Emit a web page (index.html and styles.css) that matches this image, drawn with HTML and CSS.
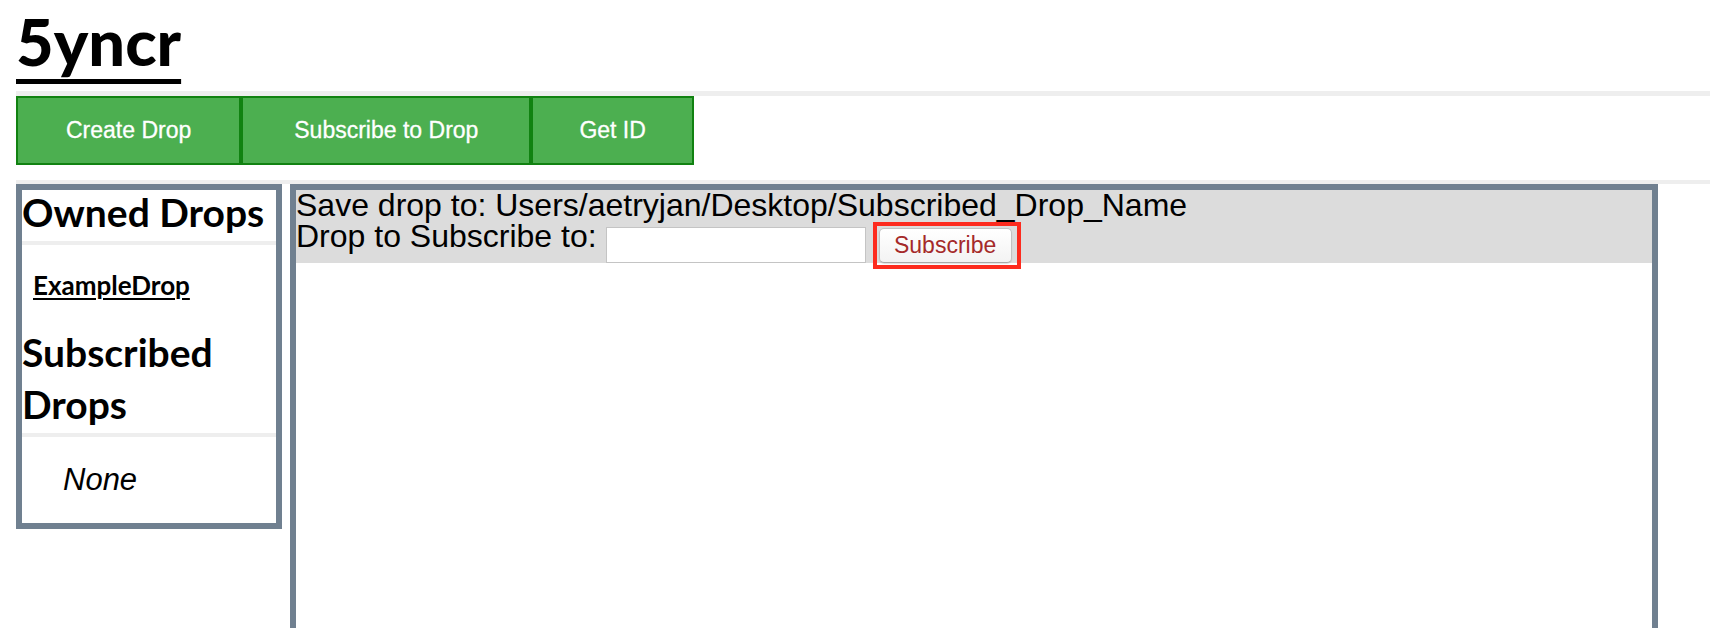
FILE: index.html
```html
<!DOCTYPE html>
<html lang="en">
<head>
<meta charset="utf-8">
<title>5yncr</title>
<link rel="stylesheet" href="styles.css">
</head>
<body>
<div class="page">
  <h1 class="logo"><a href="#">5yncr</a></h1>
  <nav class="actions">
    <button class="action">Create Drop</button>
    <button class="action action-wide">Subscribe to Drop</button>
    <button class="action action-narrow">Get ID</button>
  </nav>
  <div class="workspace">
    <aside class="sidebar">
      <h2 class="side-title">Owned Drops</h2>
      <ul class="drop-list"><li><a href="#">ExampleDrop</a></li></ul>
      <h2 class="side-title">Subscribed Drops</h2>
      <p class="none">None</p>
    </aside>
    <main class="panel">
      <div class="form">
        <div class="row">Save drop to: Users/aetryjan/Desktop/Subscribed_Drop_Name</div>
        <div class="row row-input">
          <span class="label">Drop to Subscribe to:</span>
          <input class="drop-input" type="text">
          <span class="highlight"><button class="subscribe">Subscribe</button></span>
        </div>
      </div>
    </main>
  </div>
</div>
</body>
</html>
```
FILE: styles.css
```css
html, body {
  margin: 0;
  padding: 0;
  background: #ffffff;
  overflow: hidden;
}

.page {
  margin-left: 16px;
  width: 1694px;
  font-family: "Liberation Sans", Arial, sans-serif;
  color: #000;
}

.logo {
  margin: 0;
  padding-top: 9px;
  height: 82px;
  border-bottom: 5px solid #eeeeee;
  font-family: Lato, "Liberation Sans", sans-serif;
  font-weight: 900;
  font-size: 65px;
  line-height: 65px;
}

.logo a {
  color: #000;
  text-decoration: underline;
  text-decoration-thickness: 5px;
  text-underline-offset: 13px;
}

.actions {
  display: flex;
}

.action {
  height: 69px;
  padding: 0 48px;
  margin: 0;
  background: #4caf50;
  border: 2px solid #118211;
  color: #ffffff;
  font-family: "Liberation Sans", Arial, sans-serif;
  font-size: 23px;
  -webkit-text-stroke: 0.3px #ffffff;
}

.action-wide {
  padding: 0 51px;
}

.action-narrow {
  padding: 0 46px;
}

.workspace {
  margin-top: 15px;
  border-top: 4px solid #eeeeee;
  display: flex;
  align-items: flex-start;
  gap: 8px;
}

.sidebar {
  width: 266px;
  box-sizing: border-box;
  border: 6px solid #708090;
}

.side-title {
  margin: -4px 0 0;
  padding-bottom: 3px;
  border-bottom: 4px solid #eeeeee;
  font-family: Lato, "Liberation Sans", sans-serif;
  font-weight: 700;
  font-size: 39px;
  line-height: 52px;
}

.drop-list {
  list-style: none;
  margin: 0;
  padding: 25px 0 30px 11px;
  font-family: Lato, "Liberation Sans", sans-serif;
  font-weight: 700;
  font-size: 26px;
  line-height: 30px;
}

.drop-list a {
  color: #000;
  text-decoration: underline;
  text-decoration-thickness: 2px;
  text-underline-offset: 3px;
}

.none {
  margin: 25px 0 25px;
  padding-left: 41px;
  font-style: italic;
  font-size: 31px;
  line-height: 36px;
}

.panel {
  width: 1368px;
  height: 640px;
  box-sizing: border-box;
  border: 6px solid #708090;
}

.form {
  background: #dcdcdc;
  font-size: 32px;
}

.row {
  line-height: 31px;
  white-space: nowrap;
}

.row-input {
  display: flex;
  align-items: flex-start;
  height: 42px;
}

.drop-input {
  margin: 6px 0 0 9px;
  width: 260px;
  height: 36px;
  box-sizing: border-box;
  border: 1px solid #c4c4c4;
  background: #fff;
  padding: 0 4px;
}

.highlight {
  display: flex;
  margin: 1px 0 0 7px;
  padding: 2px 5px 2px 2px;
  border: 4px solid #fd2b1e;
}

.subscribe {
  width: 133px;
  height: 35px;
  box-sizing: border-box;
  padding: 0;
  border: 1px solid #c2c2c2;
  border-bottom-color: #a9a9a9;
  border-radius: 5px;
  background: linear-gradient(#ffffff, #f3f3f3);
  box-shadow: 0 1px 1px rgba(0, 0, 0, 0.12);
  color: #a52a2a;
  font-family: "Liberation Sans", Arial, sans-serif;
  font-size: 23px;
}
```
